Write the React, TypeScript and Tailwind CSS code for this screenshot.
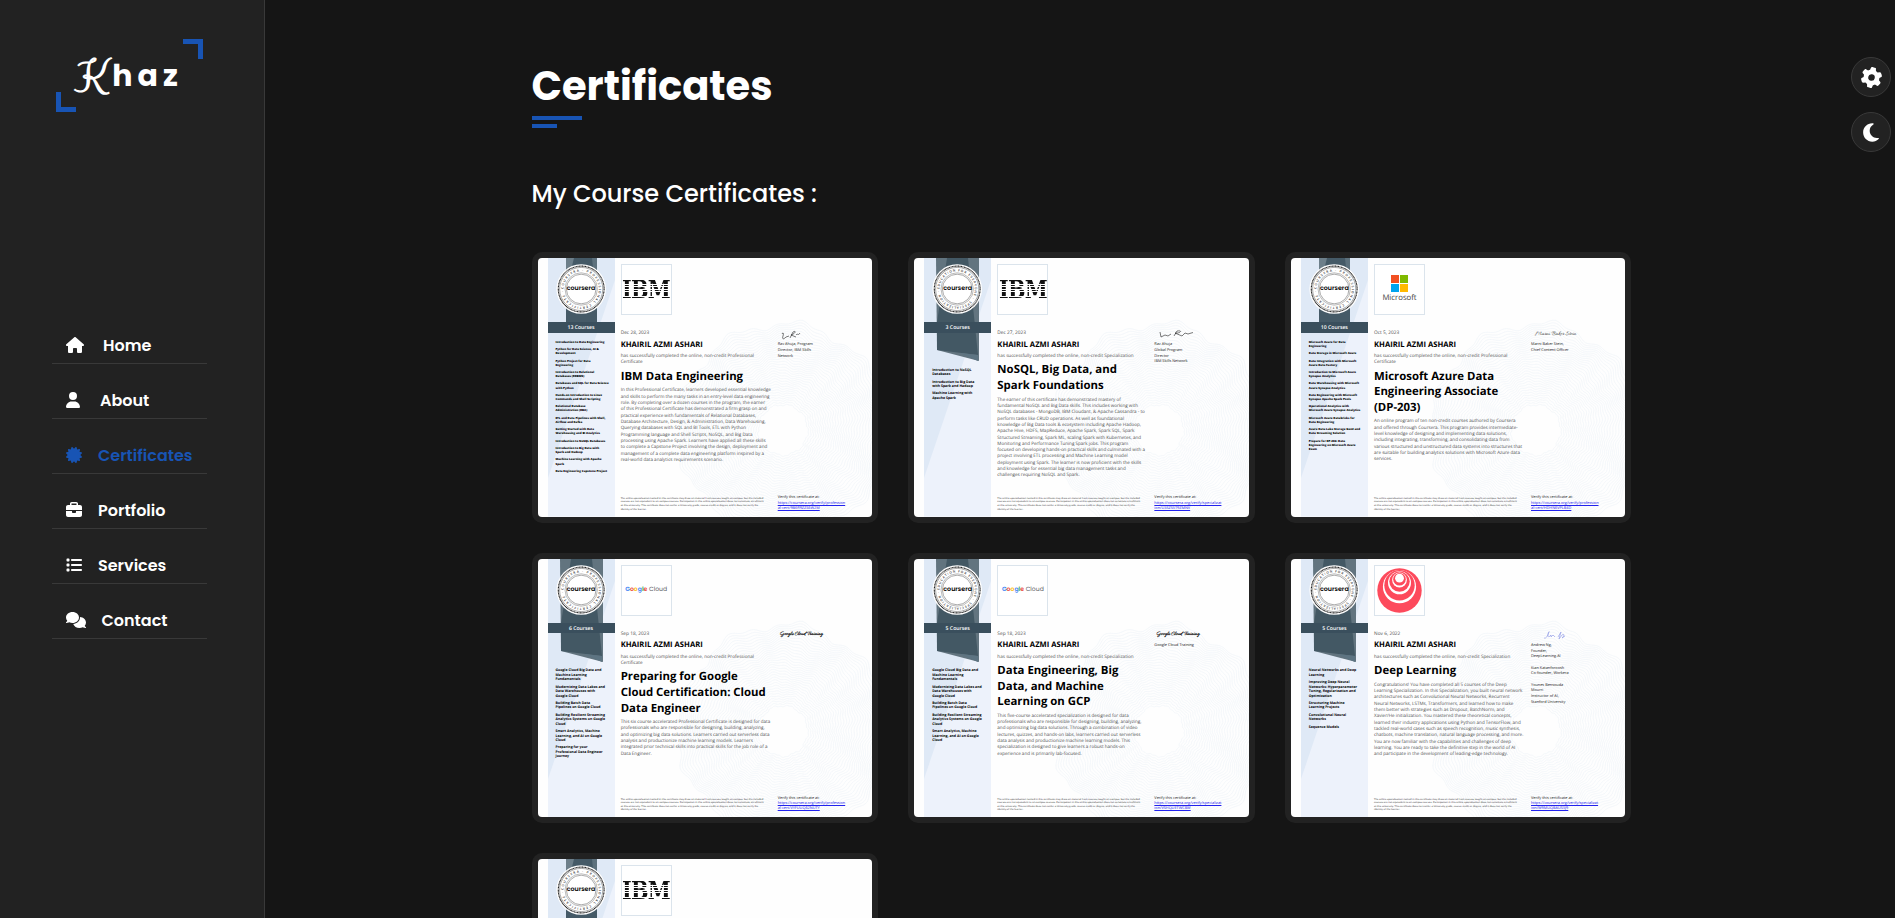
import React from "react";
import { FaHouse, FaUser, FaCertificate, FaBriefcase, FaList, FaComments, FaGear, FaMoon } from "react-icons/fa6";

type Brand = "ibm" | "microsoft" | "google" | "deeplearning";

interface Certificate {
  id: string;
  brand: Brand;
  kind: "Professional" | "Specialization";
  wide: boolean;
  count: string;
  date: string;
  title: string[];
  body: string[];
  courses: string[][];
  signature: "ahuja" | "ahujaWide" | "stein" | "google" | "ng";
  signer: string[];
  link: [string, string];
}

const certificates: Certificate[] = [
  {
    id: "ibm-de",
    brand: "ibm",
    kind: "Professional",
    wide: false,
    count: "13 Courses",
    date: "Dec 28, 2023",
    title: ["IBM Data Engineering"],
    body: [
      "In this Professional Certificate, learners developed essential knowledge",
      "and skills to perform the many tasks in an entry-level data engineering",
      "role. By completing over a dozen courses in the program, the earner",
      "of this Professional Certificate has demonstrated a firm grasp on and",
      "practical experience with fundamentals of Relational Databases,",
      "Database Architecture, Design, & Administration, Data Warehousing,",
      "Querying databases with SQL and BI Tools, ETL with Python",
      "Programming language and Shell Scripts, NoSQL, and Big Data",
      "processing using Apache Spark. Learners have applied all these skills",
      "to complete a Capstone Project involving the design, deployment and",
      "management of a complete data engineering platform inspired by a",
      "real-world data analytics requirements scenario.",
    ],
    courses: [
      ["Introduction to Data Engineering"],
      ["Python for Data Science, AI &", "Development"],
      ["Python Project for Data", "Engineering"],
      ["Introduction to Relational", "Databases (RDBMS)"],
      ["Databases and SQL for Data Science", "with Python"],
      ["Hands-on Introduction to Linux", "Commands and Shell Scripting"],
      ["Relational Database", "Administration (DBA)"],
      ["ETL and Data Pipelines with Shell,", "Airflow and Kafka"],
      ["Getting Started with Data", "Warehousing and BI Analytics"],
      ["Introduction to NoSQL Databases"],
      ["Introduction to Big Data with", "Spark and Hadoop"],
      ["Machine Learning with Apache", "Spark"],
      ["Data Engineering Capstone Project"],
    ],
    signature: "ahuja",
    signer: ["Rav Ahuja, Program", "Director, IBM Skills", "Network"],
    link: ["https://coursera.org/verify/profession", "al-cert/9B6R9ZZS6W2M"],
  },
  {
    id: "nosql",
    brand: "ibm",
    kind: "Specialization",
    wide: true,
    count: "3 Courses",
    date: "Dec 27, 2023",
    title: ["NoSQL, Big Data, and", "Spark Foundations"],
    body: [
      "The earner of this certificate has demonstrated mastery of",
      "fundamental NoSQL and Big Data skills. This includes working with",
      "NoSQL databases - MongoDB, IBM Cloudant, & Apache Cassandra - to",
      "perform tasks like CRUD operations. As well as foundational",
      "knowledge of Big Data tools & ecosystem including Apache Hadoop,",
      "Apache Hive, HDFS, MapReduce, Apache Spark, Spark SQL, Spark",
      "Structured Streaming, Spark ML, scaling Spark with Kubernetes, and",
      "Monitoring and Performance Tuning Spark jobs. This program",
      "focused on developing hands-on practical skills and culminated with a",
      "project involving ETL processing and Machine Learning model",
      "deployment using Spark. The learner is now proficient with the skills",
      "and knowledge for essential big data management tasks and",
      "challenges requiring NoSQL and Spark.",
    ],
    courses: [
      ["Introduction to NoSQL", "Databases"],
      ["Introduction to Big Data", "with Spark and Hadoop"],
      ["Machine Learning with", "Apache Spark"],
    ],
    signature: "ahujaWide",
    signer: ["Rav Ahuja", "Global Program", "Director", "IBM Skills Network"],
    link: ["https://coursera.org/verify/specializat", "ion/U3SZS5T9ZMNV"],
  },
  {
    id: "azure",
    brand: "microsoft",
    kind: "Professional",
    wide: false,
    count: "10 Courses",
    date: "Oct 5, 2023",
    title: ["Microsoft Azure Data", "Engineering Associate", "(DP-203)"],
    body: [
      "An online program of ten non-credit courses authored by Coursera",
      "and offered through Coursera. This program provides intermediate-",
      "level knowledge of designing and implementing data solutions,",
      "including integrating, transforming, and consolidating data from",
      "various structured and unstructured data systems into structures that",
      "are suitable for building analytics solutions with Microsoft Azure data",
      "services.",
    ],
    courses: [
      ["Microsoft Azure for Data", "Engineering"],
      ["Data Storage in Microsoft Azure"],
      ["Data Integration with Microsoft", "Azure Data Factory"],
      ["Introduction to Microsoft Azure", "Synapse Analytics"],
      ["Data Warehousing with Microsoft", "Azure Synapse Analytics"],
      ["Data Engineering with Microsoft", "Synapse Apache Spark Pools"],
      ["Operational Analytics with", "Microsoft Azure Synapse Analytics"],
      ["Microsoft Azure Databricks for", "Data Engineering"],
      ["Azure Data Lake Storage Gen2 and", "Data Streaming Solution"],
      ["Prepare for DP-203: Data", "Engineering on Microsoft Azure", "Exam"],
    ],
    signature: "stein",
    signer: ["Marni Baker Stein,", "Chief Content Officer"],
    link: ["https://coursera.org/verify/profession", "al-cert/HDHN6VPLB4D"],
  },
  {
    id: "gcp-pro",
    brand: "google",
    kind: "Professional",
    wide: true,
    count: "6 Courses",
    date: "Sep 18, 2023",
    title: ["Preparing for Google", "Cloud Certification: Cloud", "Data Engineer"],
    body: [
      "This six course accelerated Professional Certificate is designed for data",
      "professionals who are responsible for designing, building, analyzing,",
      "and optimizing big data solutions. Learners carried out serverless data",
      "analysis and productionize machine learning models. Learners",
      "integrated prior technical skills into practical skills for the job role of a",
      "Data Engineer.",
    ],
    courses: [
      ["Google Cloud Big Data and", "Machine Learning", "Fundamentals"],
      ["Modernizing Data Lakes and", "Data Warehouses with", "Google Cloud"],
      ["Building Batch Data", "Pipelines on Google Cloud"],
      ["Building Resilient Streaming", "Analytics Systems on Google", "Cloud"],
      ["Smart Analytics, Machine", "Learning, and AI on Google", "Cloud"],
      ["Preparing for your", "Professional Data Engineer", "Journey"],
    ],
    signature: "google",
    signer: [],
    link: ["https://coursera.org/verify/profession", "al-cert/VYFUUQ62NUTY"],
  },
  {
    id: "gcp-spec",
    brand: "google",
    kind: "Specialization",
    wide: true,
    count: "5 Courses",
    date: "Sep 18, 2023",
    title: ["Data Engineering, Big", "Data, and Machine", "Learning on GCP"],
    body: [
      "This five-course accelerated specialization is designed for data",
      "professionals who are responsible for designing, building, analyzing,",
      "and optimizing big data solutions. Through a combination of video",
      "lectures, quizzes, and hands-on labs, learners carried out serverless",
      "data analysis and productionize machine learning models. This",
      "specialization is designed to give learners a robust hands-on",
      "experience and is primarily lab-focused.",
    ],
    courses: [
      ["Google Cloud Big Data and", "Machine Learning", "Fundamentals"],
      ["Modernizing Data Lakes and", "Data Warehouses with", "Google Cloud"],
      ["Building Batch Data", "Pipelines on Google Cloud"],
      ["Building Resilient Streaming", "Analytics Systems on Google", "Cloud"],
      ["Smart Analytics, Machine", "Learning, and AI on Google", "Cloud"],
    ],
    signature: "google",
    signer: ["Google Cloud Training"],
    link: ["https://coursera.org/verify/specializat", "ion/VSHQUETWCBW"],
  },
  {
    id: "dl",
    brand: "deeplearning",
    kind: "Specialization",
    wide: true,
    count: "5 Courses",
    date: "Nov 6, 2022",
    title: ["Deep Learning"],
    body: [
      "Congratulations! You have completed all 5 courses of the Deep",
      "Learning Specialization. In this Specialization, you built neural network",
      "architectures such as Convolutional Neural Networks, Recurrent",
      "Neural Networks, LSTMs, Transformers, and learned how to make",
      "them better with strategies such as Dropout, BatchNorm, and",
      "Xavier/He initialization. You mastered these theoretical concepts,",
      "learned their industry applications using Python and TensorFlow, and",
      "tackled real-world cases such as speech recognition, music synthesis,",
      "chatbots, machine translation, natural language processing, and more.",
      "You are now familiar with the capabilities and challenges of deep",
      "learning. You are ready to take the definitive step in the world of AI",
      "and participate in the development of leading-edge technology.",
    ],
    courses: [
      ["Neural Networks and Deep", "Learning"],
      ["Improving Deep Neural", "Networks: Hyperparameter", "Tuning, Regularization and", "Optimization"],
      ["Structuring Machine", "Learning Projects"],
      ["Convolutional Neural", "Networks"],
      ["Sequence Models"],
    ],
    signature: "ng",
    signer: [
      "Andrew Ng,",
      "Founder,",
      "DeepLearning.AI",
      "",
      "Kian Katanforoosh",
      "Co-founder, Workera",
      "",
      "Younes Bensouda",
      "Mourri",
      "Instructor of AI,",
      "Stanford University",
    ],
    link: ["https://coursera.org/verify/specializat", "ion/W9MUQBAUS5J9"],
  },
];

const cards: Certificate[] = [...certificates, { ...certificates[0], id: "ibm-more" }];

const disclaimer = [
  "The online specialization named in this certificate may draw on material from courses taught on-campus, but the included",
  "courses are not equivalent to on-campus courses. Participation in this online specialization does not constitute enrollment",
  "at this university. This certificate does not confer a University grade, course credit or degree, and it does not verify the",
  "identity of the learner.",
];

function rosette(radius: number, phase: number): string {
  const pts: string[] = [];
  for (let i = 0; i <= 240; i++) {
    const a = (i / 240) * Math.PI * 2;
    const r = radius * (1 + 0.035 * Math.cos(9 * a + phase) + 0.015 * Math.cos(27 * a - phase));
    pts.push(`${(245 + r * Math.cos(a)).toFixed(1)},${(172 + r * 1.02 * Math.sin(a)).toFixed(1)}`);
  }
  return pts.join(" ");
}
const rings = Array.from({ length: 34 }, (_, i) => rosette(104 - i * 2.4, i * 0.16));

function Watermark() {
  return (
    <svg className="pointer-events-none absolute inset-0 h-full w-full" viewBox="0 0 334.67 258.67" fill="none">
      {rings.map((points, i) => (
        <polyline key={i} points={points} stroke="#eef3f9" strokeWidth="0.6" />
      ))}
    </svg>
  );
}

function Ribbon({ wide, id, kind }: { wide: boolean; id: string; kind: string }) {
  const ring = kind === "Professional" ? "COURSERA · PROFESSIONAL CERTIFICATE ·" : "EDUCATION FOR EVERYONE · SPECIALIZATION ·";
  return (
    <svg className="absolute inset-0 h-full w-full" viewBox="0 0 67 258.67">
      <rect width="67" height="258.67" fill="#edf2fb" />
      <path d="M0 0H67V22L0 220Z" fill="#dfe9f6" />
      {wide ? (
        <g>
          <path d="M12 0H55V103L13 92Z" fill="#62747f" />
          <path d="M23 0H44L54 97L13 92V64Z" fill="#435864" />
          <path d="M36 95L54 97V103Z" fill="#5d7482" />
        </g>
      ) : (
        <g>
          <path d="M18 0H49V64H18Z" fill="#455a67" />
          <path d="M18 0H26L21 20H18Z" fill="#6d7f8a" />
          <path d="M49 0H44L47 30H49Z" fill="#5d717d" />
        </g>
      )}
      <circle cx="33.2" cy="31" r="24.8" fill="#fff" />
      <circle cx="33.2" cy="31" r="22.9" fill="none" stroke="#222" strokeWidth="1.1" strokeDasharray="1.1 0.4" />
      <circle cx="33.2" cy="31" r="21.6" fill="none" stroke="#555" strokeWidth="0.5" />
      <path id={`ring-${id}`} d="M15.6 31a17.6 17.6 0 1 1 35.2 0a17.6 17.6 0 1 1 -35.2 0" fill="none" />
      <text className="font-['Open_Sans',sans-serif] text-[3.2px] font-semibold" fill="#333" textLength="108">
        <textPath href={`#ring-${id}`}>{ring}</textPath>
      </text>
      <circle cx="33.2" cy="31" r="16.2" fill="none" stroke="#777" strokeWidth="0.5" />
      <circle cx="33.2" cy="31" r="14.8" fill="#fff" stroke="#555" strokeWidth="0.5" />
    </svg>
  );
}

function BrandLogo({ brand }: { brand: Brand }) {
  if (brand === "ibm") {
    return (
      <div className="shrink-0 scale-x-[0.83] bg-[repeating-linear-gradient(to_bottom,#111_0px,#111_1.6px,transparent_1.6px,transparent_2.4px)] bg-clip-text font-['DejaVu_Serif',serif] text-[25px] leading-[20px] font-bold tracking-[-0.8px] text-transparent">
        IBM
      </div>
    );
  }
  if (brand === "microsoft") {
    return (
      <div className="flex flex-col items-center gap-[1px]">
        <div className="grid grid-cols-2 gap-[1px]">
          <span className="size-2 bg-[#f25022]" />
          <span className="size-2 bg-[#7fba00]" />
          <span className="size-2 bg-[#00a4ef]" />
          <span className="size-2 bg-[#ffb900]" />
        </div>
        <span className="text-[7.77px] leading-[11px] text-[#444]">Microsoft</span>
      </div>
    );
  }
  if (brand === "google") {
    return (
      <span className="font-['Poppins','Lato',sans-serif] text-[6.1px] leading-none whitespace-nowrap text-[#5f6368]">
        <span className="font-semibold text-[#4285f4]">G</span>
        <span className="font-semibold text-[#ea4335]">o</span>
        <span className="font-semibold text-[#fbbc05]">o</span>
        <span className="font-semibold text-[#4285f4]">g</span>
        <span className="font-semibold text-[#34a853]">l</span>
        <span className="font-semibold text-[#ea4335]">e</span> Cloud
      </span>
    );
  }
  return (
    <svg className="size-[45px]" viewBox="0 0 45 45">
      <circle cx="22.5" cy="22.5" r="22.2" fill="#fd4a5c" />
      <circle cx="22.5" cy="18.7" r="16.6" fill="#fff" />
      <circle cx="22.5" cy="17.3" r="15.2" fill="#fd4a5c" />
      <circle cx="22.5" cy="14.8" r="11.5" fill="#fff" />
      <circle cx="22.5" cy="13.6" r="10.2" fill="#fd4a5c" />
      <circle cx="22.5" cy="12" r="7.4" fill="#fff" />
      <circle cx="22.5" cy="11.2" r="6.3" fill="#fd4a5c" />
      <circle cx="22.5" cy="10.2" r="4.4" fill="#fff" />
    </svg>
  );
}

function Signature({ kind }: { kind: Certificate["signature"] }) {
  if (kind === "google") {
    return (
      <span className="ml-0.5 block font-['Allura','Liberation_Serif',serif] text-[5.6px] leading-[10px] font-bold whitespace-nowrap text-black">
        Google Cloud Training
      </span>
    );
  }
  if (kind === "stein") {
    return (
      <span className="ml-1 block font-['Allura','Liberation_Serif',serif] text-[6.1px] leading-[11px] whitespace-nowrap text-[#222]">
        Marni Baker Stein
      </span>
    );
  }
  const strokes = {
    ahuja: "M4 5C5 3 6 4 5 7S5 11 8 8L11 7M12 9L15 3C19 1 17 5 13 6L18 8M18 6C20 4 20 7 22 4",
    ahujaWide: "M6 3L7 8L11 6L14 7L17 5M20 7L23 2C30 1 25 5 21 4L28 7L31 4L34 5L39 3.5",
    ng: "M13 8C16 9 17 4 18 2S15 6 18 7L20 5V7L22 5L24 7M27 7L30 2L28 9L31 5C33 3 34 6 31 8L34 6",
  }[kind];
  return (
    <svg className="h-[11px] w-10" viewBox="0 0 40 11" fill="none">
      <path d={strokes} stroke={kind === "ng" ? "#8a94e6" : "#222"} strokeWidth="0.6" />
    </svg>
  );
}

function Lines({ lines }: { lines: string[] }) {
  return (
    <>
      {lines.map((line, i) => (
        <span key={i} className="block whitespace-nowrap">
          {line || "\u00a0"}
        </span>
      ))}
    </>
  );
}

function CertificateSheet({ cert }: { cert: Certificate }) {
  const completed =
    cert.kind === "Professional"
      ? ["has successfully completed the online, non-credit Professional", "Certificate"]
      : ["has successfully completed the online, non-credit Specialization"];
  return (
    <div className="relative flex h-[258.67px] overflow-hidden rounded-[4px] bg-[#fefefe] font-['Open_Sans','Noto_Sans',sans-serif] text-black [text-rendering:geometricPrecision]">
      <Watermark />
      <div className="relative ml-[10px] w-[67px] shrink-0">
        <Ribbon wide={cert.wide} id={cert.id} kind={cert.kind} />
        <div className="relative flex h-full flex-col">
          <div className="flex h-16 items-start justify-center pt-[25px]">
            <span className="font-['Poppins','Inter',sans-serif] text-[6.3px] leading-[11px] font-semibold">coursera</span>
          </div>
          <div className="h-[10.67px] bg-[#3a4f5d] text-center text-[5.15px] leading-[10.4px] font-semibold text-white">{cert.count}</div>
          <ul
            className={
              cert.wide
                ? "mt-[36px] ml-[8px] space-y-[3px] text-[3.5px] leading-[4.43px] font-bold"
                : "mt-[7.2px] ml-[8px] space-y-[3.2px] text-[2.9px] leading-[4.13px] font-extrabold"
            }
          >
            {cert.courses.map((course, i) => (
              <li key={i}>
                <Lines lines={course} />
              </li>
            ))}
          </ul>
        </div>
      </div>
      <div className="relative ml-[6.2px] flex w-[157px] shrink-0 flex-col pt-[6px] pb-[5.6px] text-[4.62px] leading-[6.33px] text-[#505050]">
        <div className="flex size-[51px] items-center justify-center border border-[#dbe4ec] bg-white">
          <BrandLogo brand={cert.brand} />
        </div>
        <p className="mt-[14.9px] text-[4.8px]">{cert.date}</p>
        <h4 className="mt-[3.3px] text-[7.64px] leading-[10px] font-bold whitespace-nowrap text-black">KHAIRIL AZMI ASHARI</h4>
        <p className="mt-[3.5px]">
          <Lines lines={completed} />
        </p>
        <h3 className="mt-[3px] text-[11.38px] leading-[15.6px] font-bold text-black">
          <Lines lines={cert.title} />
        </h3>
        <p className="mt-[3px] text-[4.55px]">
          <Lines lines={cert.body} />
        </p>
        <p className="mt-auto text-[2.52px] leading-[3.55px] text-[#222]">
          <Lines lines={disclaimer} />
        </p>
      </div>
      <div className="relative flex flex-1 flex-col pt-[71px] pb-[5.5px] text-[3.85px] leading-[5.7px] text-[#222]">
        <div className="mb-[2.2px] h-[11px]">
          <Signature kind={cert.signature} />
        </div>
        <p>
          <Lines lines={cert.signer} />
        </p>
        <p className="mt-auto leading-[5.33px]">
          Verify this certificate at:
          <a className="block whitespace-nowrap text-[#2222ee] underline">
            {cert.link[0]}
            <br />
            {cert.link[1]}
          </a>
        </p>
      </div>
    </div>
  );
}

const navItems = [
  { label: "Home", Icon: FaHouse, boxClass: "w-[37px]", iconClass: "h-4 w-[18px]" },
  { label: "About", Icon: FaUser, boxClass: "w-[34px]", iconClass: "h-4 w-[14px]" },
  { label: "Certificates", Icon: FaCertificate, boxClass: "w-[32px]", iconClass: "size-4" },
  { label: "Portfolio", Icon: FaBriefcase, boxClass: "w-[32px]", iconClass: "size-4" },
  { label: "Services", Icon: FaList, boxClass: "w-[32px]", iconClass: "size-4" },
  { label: "Contact", Icon: FaComments, boxClass: "w-[35.5px]", iconClass: "h-4 w-5" },
];

function Sidebar() {
  return (
    <aside className="flex w-[265px] shrink-0 flex-col border-r border-[#393939] bg-[#222222] pt-[39px] pl-[52px]">
      <div className="relative ml-1 flex h-[73px] w-[147px] items-center justify-center">
        <span className="absolute top-0 right-0 size-5 border-t-[5px] border-r-[5px] border-[#1854b4]" />
        <span className="absolute bottom-0 left-0 size-5 border-b-[5px] border-l-[5px] border-[#1854b4]" />
        <a className="flex items-baseline text-[30px] leading-[45px] font-bold tracking-[5px]">
          <span className="font-['Clicker_Script','Liberation_Serif',serif] text-[40px] leading-[45px]">K</span>
          haz
        </a>
      </div>
      <nav className="mt-[206px] w-[155px]">
        <ul className="flex flex-col gap-[9px]">
          {navItems.map(({ label, Icon, boxClass, iconClass }) => (
            <li
              key={label}
              className={
                label === "Certificates"
                  ? "flex h-[46px] items-center border-b border-[#393939] pt-[10px] pl-[14px] text-[#1854b4]"
                  : "flex h-[46px] items-center border-b border-[#393939] pt-[10px] pl-[14px]"
              }
            >
              <span className={boxClass}>
                <Icon className={`mb-px ${iconClass}`} />
              </span>
              <span className="text-base font-semibold">{label}</span>
            </li>
          ))}
        </ul>
      </nav>
    </aside>
  );
}

export default function App() {
  return (
    <div className="relative flex h-[918px] w-full overflow-hidden bg-[#151515] font-['Poppins','Inter',sans-serif] text-white">
      <Sidebar />
      <main className="ml-[266.5px] w-[1100px] pt-[56px]">
        <h2 className="h-[60px] text-[40px] leading-[60px] font-bold">Certificates</h2>
        <div className="h-1 w-[50px] bg-[#1854b4]" />
        <div className="mt-1 h-1 w-[25px] bg-[#1854b4]" />
        <h3 className="mt-12 h-[36px] text-2xl leading-[36px] font-medium">My Course Certificates :</h3>
        <div className="mt-[40px] grid grid-cols-3 gap-[30px]">
          {cards.map((cert) => (
            <article key={cert.id} className="rounded-[10px] border-[6px] border-[#222222] bg-[#222222]">
              <CertificateSheet cert={cert} />
            </article>
          ))}
        </div>
      </main>
      <div className="absolute top-[57px] right-1 flex flex-col gap-[15px]">
        <button className="flex size-10 items-center justify-center rounded-full border border-[#393939] bg-[#222222]">
          <FaGear className="ml-px size-[21px] rotate-[12deg]" />
        </button>
        <button className="flex size-10 items-center justify-center rounded-full border border-[#393939] bg-[#222222]">
          <FaMoon className="h-[21px] w-4" />
        </button>
      </div>
    </div>
  );
}
